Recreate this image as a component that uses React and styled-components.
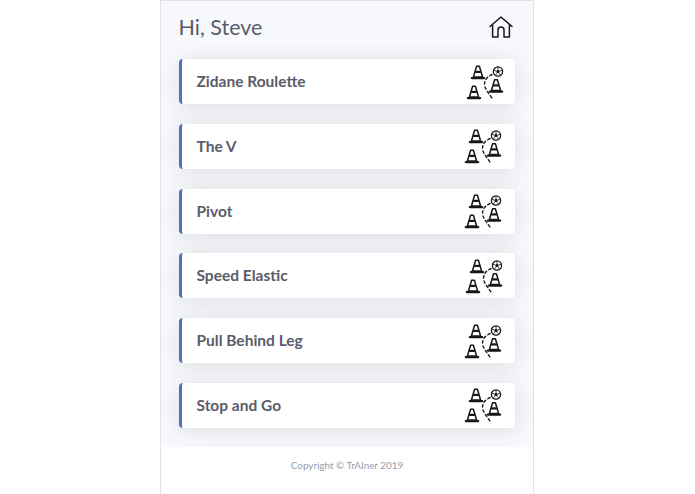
import React from 'react';
import styled, { createGlobalStyle } from 'styled-components';

const Global = createGlobalStyle`
  html, body {
    margin: 0;
    padding: 0;
    background: #fff;
    font-family: "Lato", "Open Sans", sans-serif;
  }
`;

const Panel = styled.div`
  width: 374px;
  height: 494px;
  margin-left: 160px;
  box-sizing: border-box;
  border: 1px solid #e2e3e9;
  border-bottom: none;
  background: #f8f9fc;
  display: flex;
  flex-direction: column;
  overflow: hidden;
`;

const Header = styled.header`
  display: flex;
  justify-content: space-between;
  align-items: center;
  height: 58px;
  box-sizing: border-box;
  padding: 0 20px 6px 17.5px;
`;

const Title = styled.h1`
  margin: 0;
  font-size: 21.5px;
  font-weight: 400;
  color: #5a5c69;
`;

const List = styled.div`
  flex: 1;
  display: flex;
  flex-direction: column;
  gap: 19.8px;
  padding: 0 18px;
`;

const Card = styled.div`
  height: 45px;
  flex: none;
  box-sizing: border-box;
  display: flex;
  align-items: center;
  justify-content: space-between;
  background: #fff;
  border-left: 3.5px solid #4a73c0;
  border-radius: 4px;
  padding: 0 ${props => props.$iconInset}px 0 14.5px;
  box-shadow: 0 2.5px 22px rgba(58, 59, 69, 0.15);
`;

const Name = styled.span`
  font-size: 15.5px;
  font-weight: 700;
  color: #5a5c69;
  position: relative;
  top: -0.5px;
`;

const Footer = styled.footer`
  height: 47px;
  flex: none;
  box-sizing: border-box;
  padding-bottom: 12px;
  background: #fff;
  display: flex;
  justify-content: center;
  align-items: center;
  font-size: 9.9px;
  color: #9a9ba6;
`;

const HomeIcon = () => (
  <svg width="24" height="22" viewBox="0 0 24 22" fill="none" stroke="#16171c" strokeWidth="1.5" strokeLinejoin="round" strokeLinecap="round">
    <path d="M1 10.5 L12 1 L23 10.5" />
    <path d="M3.6 9 V21 H9 V14 a3 3 0 0 1 6 0 V21 H20.4 V9" />
  </svg>
);

const Cone = ({ x, y }) => (
  <g transform={`translate(${x} ${y})`}>
    <path d="M5.6 0.8 H8.4 L11.6 11.5 H2.4 Z" fill="#fff" stroke="#16171c" strokeWidth="1.5" strokeLinejoin="round" />
    <path d="M4.2 6.4 H9.8" stroke="#16171c" strokeWidth="2.2" />
    <path d="M0.8 12.6 H13.2" stroke="#16171c" strokeWidth="2.2" strokeLinecap="round" />
  </g>
);

const DrillIcon = () => (
  <svg width="38" height="36" viewBox="0 0 38 36" fill="none">
    <Cone x="5" y="1.5" />
    <Cone x="1" y="21.5" />
    <Cone x="23" y="15" />
    <circle cx="32" cy="7.5" r="4.6" stroke="#16171c" strokeWidth="1.3" />
    <path d="M32 5.6 L33.8 7 L33.1 9.1 H30.9 L30.2 7 Z" fill="#16171c" />
    <path d="M32 3 V5.6 M36.3 6.2 L33.8 7 M34.7 11.2 L33.1 9.1 M29.3 11.2 L30.9 9.1 M27.7 6.2 L30.2 7" stroke="#16171c" strokeWidth="0.8" />
    <path d="M26 10.5 C22 12.5 17 16 19 23 C20.5 27 24 31 27 35.5" stroke="#16171c" strokeWidth="1.4" strokeDasharray="2.6 2.6" strokeLinecap="round" />
  </svg>
);

const drills = [
  { name: 'Zidane Roulette', inset: 11 },
  { name: 'The V', inset: 13 },
  { name: 'Pivot', inset: 13 },
  { name: 'Speed Elastic', inset: 12 },
  { name: 'Pull Behind Leg', inset: 13 },
  { name: 'Stop and Go', inset: 13 },
];

const App = () => (
  <>
    <Global />
    <Panel>
      <Header>
        <Title>Hi, Steve</Title>
        <HomeIcon />
      </Header>
      <List>
        {drills.map(drill => (
          <Card key={drill.name} $iconInset={drill.inset}>
            <Name>{drill.name}</Name>
            <DrillIcon />
          </Card>
        ))}
      </List>
      <Footer>Copyright © TrAIner 2019</Footer>
    </Panel>
  </>
);

export default App;
